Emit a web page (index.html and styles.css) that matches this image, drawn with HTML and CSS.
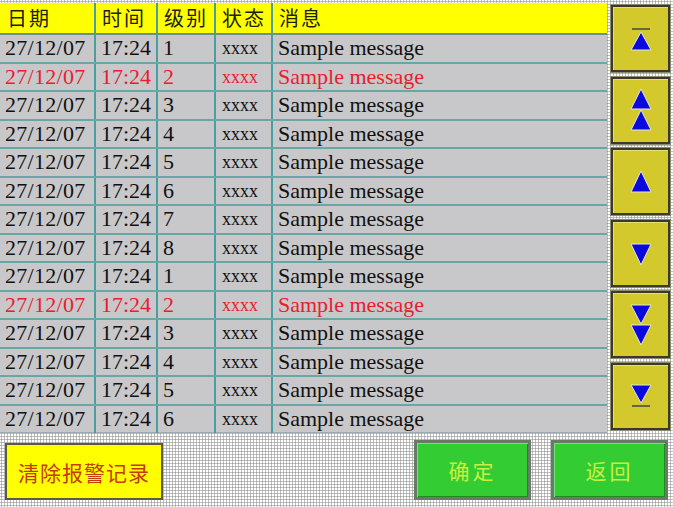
FILE: index.html
```html
<!DOCTYPE html>
<html lang="zh">
<head>
<meta charset="utf-8">
<link rel="stylesheet" href="styles.css">
</head>
<body>
<div class="screen">
  <div class="top">
    <table class="log">
      <colgroup>
        <col class="c-date"><col class="c-time"><col class="c-level"><col class="c-state"><col class="c-msg">
      </colgroup>
      <thead>
        <tr><th>日期</th><th>时间</th><th>级别</th><th>状态</th><th>消息</th></tr>
      </thead>
      <tbody>
        <tr><td>27/12/07</td><td>17:24</td><td>1</td><td class="st">xxxx</td><td>Sample message</td></tr>
        <tr class="alarm"><td>27/12/07</td><td>17:24</td><td>2</td><td class="st">xxxx</td><td>Sample message</td></tr>
        <tr><td>27/12/07</td><td>17:24</td><td>3</td><td class="st">xxxx</td><td>Sample message</td></tr>
        <tr><td>27/12/07</td><td>17:24</td><td>4</td><td class="st">xxxx</td><td>Sample message</td></tr>
        <tr><td>27/12/07</td><td>17:24</td><td>5</td><td class="st">xxxx</td><td>Sample message</td></tr>
        <tr><td>27/12/07</td><td>17:24</td><td>6</td><td class="st">xxxx</td><td>Sample message</td></tr>
        <tr><td>27/12/07</td><td>17:24</td><td>7</td><td class="st">xxxx</td><td>Sample message</td></tr>
        <tr><td>27/12/07</td><td>17:24</td><td>8</td><td class="st">xxxx</td><td>Sample message</td></tr>
        <tr><td>27/12/07</td><td>17:24</td><td>1</td><td class="st">xxxx</td><td>Sample message</td></tr>
        <tr class="alarm"><td>27/12/07</td><td>17:24</td><td>2</td><td class="st">xxxx</td><td>Sample message</td></tr>
        <tr><td>27/12/07</td><td>17:24</td><td>3</td><td class="st">xxxx</td><td>Sample message</td></tr>
        <tr><td>27/12/07</td><td>17:24</td><td>4</td><td class="st">xxxx</td><td>Sample message</td></tr>
        <tr><td>27/12/07</td><td>17:24</td><td>5</td><td class="st">xxxx</td><td>Sample message</td></tr>
        <tr><td>27/12/07</td><td>17:24</td><td>6</td><td class="st">xxxx</td><td>Sample message</td></tr>
      </tbody>
    </table>
    <div class="nav">
      <button class="navbtn" aria-label="top">
        <svg viewBox="0 0 30 30" width="30" height="30"><line x1="6" y1="5" x2="24" y2="5" stroke="#444" stroke-width="1.5"/><polygon points="15,8 25,26 5,26" fill="#0a0ae0" stroke="#e8e8d0" stroke-width="1"/></svg>
      </button>
      <button class="navbtn" aria-label="page up">
        <svg viewBox="0 0 30 44" width="30" height="44"><polygon points="15,1 25,21 5,21" fill="#0a0ae0" stroke="#e8e8d0" stroke-width="1"/><polygon points="15,22 25,42 5,42" fill="#0a0ae0" stroke="#e8e8d0" stroke-width="1"/></svg>
      </button>
      <button class="navbtn" aria-label="up">
        <svg viewBox="0 0 30 30" width="30" height="30"><polygon points="15,4 25,25 5,25" fill="#0a0ae0" stroke="#e8e8d0" stroke-width="1"/></svg>
      </button>
      <button class="navbtn" aria-label="down">
        <svg viewBox="0 0 30 30" width="30" height="30"><polygon points="5,6 25,6 15,27" fill="#0a0ae0" stroke="#e8e8d0" stroke-width="1"/></svg>
      </button>
      <button class="navbtn" aria-label="page down">
        <svg viewBox="0 0 30 44" width="30" height="44"><polygon points="5,2 25,2 15,21" fill="#0a0ae0" stroke="#e8e8d0" stroke-width="1"/><polygon points="5,22 25,22 15,42" fill="#0a0ae0" stroke="#e8e8d0" stroke-width="1"/></svg>
      </button>
      <button class="navbtn" aria-label="bottom">
        <svg viewBox="0 0 30 30" width="30" height="30"><polygon points="5,4 25,4 15,22" fill="#0a0ae0" stroke="#e8e8d0" stroke-width="1"/><line x1="6" y1="25" x2="24" y2="25" stroke="#444" stroke-width="1.5"/></svg>
      </button>
    </div>
  </div>
  <div class="bottom">
    <button class="clear">清除报警记录</button>
    <div class="spacer"></div>
    <button class="green">确定</button>
    <button class="green">返回</button>
  </div>
</div>
</body>
</html>
```
FILE: styles.css
```css
html, body {
  margin: 0;
  padding: 0;
}
body {
  width: 673px;
  height: 507px;
  overflow: hidden;
  background-color: #ffffff;
  background-image: radial-gradient(circle, #a0a0a0 0.9px, transparent 1.2px);
  background-size: 3px 3px;
}
.screen {
  display: flex;
  flex-direction: column;
  height: 507px;
}
.top {
  display: flex;
  align-items: flex-start;
  padding-top: 3px;
}
.log {
  width: 607px;
  border-collapse: collapse;
  table-layout: fixed;
  background: #c8c8ca;
  font-family: "Liberation Serif", "Times New Roman", serif;
  font-size: 22px;
  color: #111111;
}
.c-date { width: 95px; }
.c-time { width: 62px; }
.c-level { width: 58px; }
.c-state { width: 57px; }
.c-msg { width: 335px; }
.log th {
  background: #ffff00;
  height: 30px;
  padding: 0 0 0 6px;
  text-align: left;
  font-family: "Noto Sans CJK SC", "Noto Sans", sans-serif;
  font-weight: 400;
  font-size: 20px;
  line-height: 30px;
  color: #1c2208;
  border-left: 2px solid #4aa0a0;
  border-bottom: 2px solid #6b8e8e;
  letter-spacing: 2px;
}
.log th:first-child { border-left: none; padding-left: 7px; }
.log td {
  height: 26.5px;
  padding: 0 0 0 5px;
  line-height: 26px;
  white-space: nowrap;
  overflow: hidden;
  border-left: 2px solid #4aa0a0;
  border-bottom: 2px solid #6aa6a6;
}
.log td:first-child { border-left: none; padding-left: 5px; letter-spacing: 0.3px; }
.log td.st { font-size: 18px; padding-left: 6px; }
.log tbody tr:last-child td { border-bottom: 1px solid #9ab; }
.log tr.alarm td { color: #e8202c; }
.nav {
  display: flex;
  flex-direction: column;
  gap: 4.6px;
  margin-left: 4px;
  padding-top: 2px;
}
.navbtn {
  width: 59px;
  height: 67px;
  padding: 0;
  background: #d3c92c;
  border: 2px solid #3a3a28;
  box-shadow: inset 1px 1px 0 #e8e070, 0 0 0 1px #8a8a70;
  display: flex;
  align-items: center;
  justify-content: center;
}
.bottom {
  display: flex;
  align-items: flex-start;
  padding: 7px 5px 0 5px;
}
.clear {
  width: 158px;
  height: 57px;
  margin-top: 3px;
  background: #ffff00;
  border: 2px solid #5a5a48;
  font-family: "Noto Sans CJK SC", sans-serif;
  font-size: 21px;
  color: #c43c00;
  padding: 0;
  letter-spacing: 1px;
}
.spacer { flex: 1; }
.green {
  width: 117px;
  height: 60px;
  background: #33cc33;
  border: 3px solid #6a7a6a;
  box-shadow: inset 1px 1px 0 #7ae07a, inset -1px -1px 0 #228822;
  font-family: "Noto Sans CJK SC", sans-serif;
  font-size: 21px;
  color: #c8f040;
  padding: 0;
  letter-spacing: 3px;
}
.green + .green { margin-left: 20px; }
```
